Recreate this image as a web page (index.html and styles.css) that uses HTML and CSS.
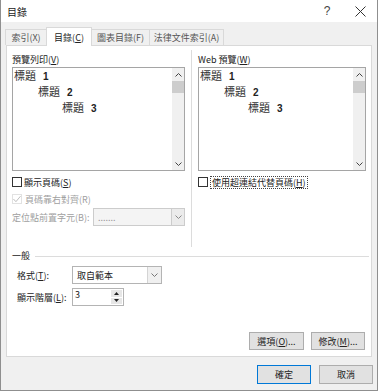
FILE: index.html
```html
<!DOCTYPE html>
<html lang="zh-Hant">
<head>
    <meta charset="UTF-8">
    <title>目錄</title>
    <link rel="stylesheet" href="styles.css">
</head>
<body>
    <div class="window">
        <div class="titlebar">
            <span class="title">目錄</span>
            <span class="help">?</span>
            <span class="close">
                <svg width="11" height="11" viewBox="0 0 11 11"><path d="M0.5 0.5L10.5 10.5M10.5 0.5L0.5 10.5" stroke="#333" stroke-width="1" fill="none"/></svg>
            </span>
        </div>

        <div class="tabs">
            <div class="tab w1">索引(X)</div>
            <div class="tab tab-active w2">目錄(<u>C</u>)</div>
            <div class="tab w3">圖表目錄(F)</div>
            <div class="tab w4">法律文件索引(A)</div>
        </div>

        <div class="panel">
            <div class="columns">
                <div class="col col-left">
                    <div class="label">預覽列印(<u>V</u>)</div>
                    <div class="preview">
                        <div class="preview-lines">
                            <div class="lv1">標題<span class="num">1</span></div>
                            <div class="lv2">標題<span class="num">2</span></div>
                            <div class="lv3">標題<span class="num">3</span></div>
                        </div>
                        <div class="scrollbar">
                            <div class="sb-btn"><svg width="7" height="4" viewBox="0 0 7 4"><path d="M0.5 3.5L3.5 0.5L6.5 3.5" stroke="#444" fill="none"/></svg></div>
                            <div class="sb-thumb"></div>
                            <div class="sb-track"></div>
                            <div class="sb-btn"><svg width="7" height="4" viewBox="0 0 7 4"><path d="M0.5 0.5L3.5 3.5L6.5 0.5" stroke="#444" fill="none"/></svg></div>
                        </div>
                    </div>
                    <div class="check row1">
                        <span class="box"></span>
                        <span>顯示頁碼(<u>S</u>)</span>
                    </div>
                    <div class="check row2 disabled">
                        <span class="box box-off">
                            <svg width="9" height="8" viewBox="0 0 9 8"><path d="M0.5 4L3.3 7L8.5 0.8" stroke="#b4b4b4" stroke-width="1" fill="none"/></svg>
                        </span>
                        <span>頁碼靠右對齊(R)</span>
                    </div>
                    <div class="field row3">
                        <span class="field-label disabled">定位點前置字元(B):</span>
                        <div class="select select-off">
                            <span class="select-text">.......</span>
                            <span class="select-btn"><svg width="7" height="4" viewBox="0 0 7 4"><path d="M0.5 0.5L3.5 3.5L6.5 0.5" stroke="#888" fill="none"/></svg></span>
                        </div>
                    </div>
                </div>

                <div class="divider"></div>

                <div class="col col-right">
                    <div class="label">Web 預覽(<u>W</u>)</div>
                    <div class="preview">
                        <div class="preview-lines">
                            <div class="lv1">標題<span class="num">1</span></div>
                            <div class="lv2">標題<span class="num">2</span></div>
                            <div class="lv3">標題<span class="num">3</span></div>
                        </div>
                        <div class="scrollbar">
                            <div class="sb-btn"><svg width="7" height="4" viewBox="0 0 7 4"><path d="M0.5 3.5L3.5 0.5L6.5 3.5" stroke="#444" fill="none"/></svg></div>
                            <div class="sb-thumb"></div>
                            <div class="sb-track"></div>
                            <div class="sb-btn"><svg width="7" height="4" viewBox="0 0 7 4"><path d="M0.5 0.5L3.5 3.5L6.5 0.5" stroke="#444" fill="none"/></svg></div>
                        </div>
                    </div>
                    <div class="check row1">
                        <span class="box"></span>
                        <span class="focus">使用超連結代替頁碼(<u>H</u>)</span>
                    </div>
                </div>
            </div>

            <div class="group-title">
                <span>一般</span>
                <span class="group-line"></span>
            </div>

            <div class="field fmt-row">
                <span class="field-label short">格式(<u>T</u>):</span>
                <div class="select select-fmt">
                    <span class="select-text">取自範本</span>
                    <span class="select-btn"><svg width="7" height="4" viewBox="0 0 7 4"><path d="M0.5 0.5L3.5 3.5L6.5 0.5" stroke="#777" fill="none"/></svg></span>
                </div>
            </div>

            <div class="field lvl-row">
                <span class="field-label short">顯示階層(<u>L</u>):</span>
                <div class="spinner">
                    <span class="spin-value">3</span>
                    <span class="spin-btns">
                        <span class="spin-btn"><svg width="5" height="3" viewBox="0 0 5 3"><path d="M0 3L2.5 0L5 3Z" fill="#222"/></svg></span>
                        <span class="spin-btn"><svg width="5" height="3" viewBox="0 0 5 3"><path d="M0 0L2.5 3L5 0Z" fill="#222"/></svg></span>
                    </span>
                </div>
            </div>

            <div class="panel-buttons">
                <button class="btn btn-options">選項(<u>O</u>)...</button>
                <button class="btn btn-modify">修改(<u>M</u>)...</button>
            </div>
        </div>

        <div class="footer">
            <button class="btn btn-ok">確定</button>
            <button class="btn btn-cancel">取消</button>
        </div>
    </div>
</body>
</html>
```

FILE: styles.css
```css
html, body {
    margin: 0;
    padding: 0;
    background: #f0f0f0;
}
.window {
    width: 378px;
    height: 391px;
    box-sizing: border-box;
    border: 1px solid #8f8f8f;
    border-top: none;
    background: #f0f0f0;
    display: flex;
    flex-direction: column;
    font-family: "Noto Sans CJK TC", "Liberation Sans", sans-serif;
    font-size: 9px;
    color: #222;
}
u {
    text-decoration: underline;
    text-underline-offset: 1px;
}

/* title bar */
.titlebar {
    height: 22px;
    background: #ffffff;
    display: flex;
    align-items: center;
    padding: 0 6px 0 6px;
}
.title {
    flex: 1;
    font-size: 10px;
    color: #222;
}
.help {
    width: 20px;
    margin-right: 12px;
    text-align: center;
    font-family: "Liberation Sans", sans-serif;
    font-size: 12px;
    color: #444;
}
.close {
    width: 22px;
    display: flex;
    justify-content: center;
    align-items: center;
}

/* tabs */
.tabs {
    height: 23px;
    display: flex;
    align-items: flex-end;
    padding-left: 4px;
}
.tab {
    height: 16px;
    box-sizing: border-box;
    border: 1px solid #d9d9d9;
    border-bottom: none;
    margin-right: -1px;
    background: #f0f0f0;
    color: #555;
    display: flex;
    align-items: center;
    justify-content: center;
}
.tab-active {
    height: 19px;
    margin-bottom: -1px;
    background: #ffffff;
    color: #222;
    position: relative;
    z-index: 1;
}
.w1 { width: 42px; }
.w2 { width: 46px; }
.w3 { width: 59px; }
.w4 { width: 75px; }

/* main panel */
.panel {
    margin: 0 5px;
    height: 312px;
    box-sizing: border-box;
    background: #ffffff;
    border: 1px solid #d9d9d9;
    display: flex;
    flex-direction: column;
}
.columns {
    display: flex;
    padding: 7px 0 0 5px;
}
.col-left {
    width: 173px;
}
.col-right {
    width: 168px;
}
.divider {
    width: 1px;
    height: 197px;
    margin: -3px 6px 0 6px;
    background: #dcdcdc;
}
.label {
    height: 14px;
    line-height: 14px;
}

/* preview boxes */
.preview {
    height: 104px;
    box-sizing: border-box;
    border: 1px solid #a5a5a5;
    display: flex;
}
.preview-lines {
    flex: 1;
    padding-left: 1px;
    font-size: 11px;
    line-height: 15px;
    color: #333;
}
.lv2 { padding-left: 24px; }
.lv3 { padding-left: 48px; }
.num {
    margin-left: 7px;
    font-family: "Liberation Sans", sans-serif;
    font-weight: bold;
    font-size: 10px;
    color: #222;
}
.scrollbar {
    width: 12px;
    background: #f0f0f0;
    display: flex;
    flex-direction: column;
}
.sb-btn {
    height: 13px;
    display: flex;
    align-items: center;
    justify-content: center;
}
.sb-thumb {
    height: 12px;
    background: #cdcdcd;
}
.sb-track {
    flex: 1;
}

/* checkboxes */
.check {
    height: 14px;
    display: flex;
    align-items: center;
    gap: 2px;
}
.row1 { margin-top: 4px; }
.row2 { margin-top: 3px; gap: 3px; }
.box {
    width: 10px;
    height: 10px;
    box-sizing: border-box;
    border: 1px solid #333;
    background: #fff;
    display: flex;
    align-items: center;
    justify-content: center;
}
.box-off {
    border-color: #e2e2e2;
}
.disabled {
    color: #a0a0a0;
}
.focus {
    border: 1px dotted #444;
    padding: 0 1px;
    line-height: 11px;
}

/* fields and selects */
.field {
    display: flex;
    align-items: center;
}
.row3 {
    margin-top: 2px;
}
.field-label {
    width: 81px;
}
.select {
    height: 18px;
    box-sizing: border-box;
    display: flex;
    align-items: stretch;
    border: 1px solid #cccccc;
}
.select-off {
    width: 92px;
    background: #f4f4f4;
    color: #999;
}
.select-text {
    flex: 1;
    padding-left: 4px;
    display: flex;
    align-items: center;
}
.select-btn {
    width: 12px;
    border-left: 1px solid #cccccc;
    background: #ebebeb;
    display: flex;
    align-items: center;
    justify-content: center;
}
.select-fmt {
    width: 90px;
    background: #ffffff;
    color: #222;
    border-color: #b4b4b4;
}
.select-fmt .select-btn {
    width: 13px;
    background: #f0f0f0;
    border-left-color: #d4d4d4;
}

/* general group */
.group-title {
    margin-top: 2px;
    height: 14px;
    line-height: 14px;
    display: flex;
    align-items: center;
    padding: 0 2px 0 5px;
}
.group-line {
    flex: 1;
    height: 1px;
    margin-left: 5px;
    background: #dcdcdc;
}
.fmt-row {
    margin-top: 3px;
    padding-left: 10px;
}
.lvl-row {
    margin-top: 4px;
    padding-left: 10px;
}
.short {
    width: 55px;
}
.spinner {
    width: 52px;
    height: 18px;
    box-sizing: border-box;
    border: 1px solid #b4b4b4;
    display: flex;
}
.spin-value {
    flex: 1;
    padding-left: 2px;
    line-height: 11px;
}
.spin-btns {
    width: 11px;
    margin: 1px 1px 1px 0;
    display: flex;
    flex-direction: column;
    gap: 1px;
}
.spin-btn {
    flex: 1;
    background: #e6e6e6;
    display: flex;
    align-items: center;
    justify-content: center;
}

/* buttons */
.btn {
    height: 18px;
    padding: 0;
    box-sizing: border-box;
    border: 1px solid #adadad;
    background: #e1e1e1;
    font-family: "Noto Sans CJK TC", "Liberation Sans", sans-serif;
    font-size: 9px;
    color: #222;
}
.panel-buttons {
    margin-top: auto;
    margin-bottom: 6px;
    padding-right: 6px;
    display: flex;
    justify-content: flex-end;
    gap: 7px;
}
.btn-options { width: 55px; }
.btn-modify { width: 54px; }
.footer {
    padding: 8px 4px 0 0;
    display: flex;
    justify-content: flex-end;
    gap: 8px;
}
.footer .btn {
    width: 54px;
    height: 19px;
}
.btn-ok {
    border-color: #0078d7;
}
```
